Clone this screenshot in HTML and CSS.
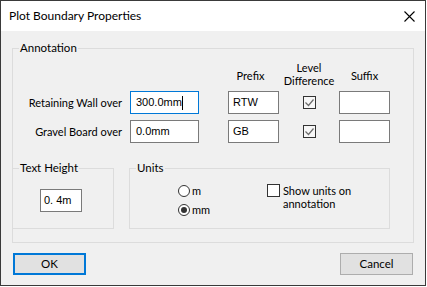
FILE: index.html
```html
<!DOCTYPE html>
<html>
<head>
<meta charset="utf-8">
<link rel="stylesheet" href="styles.css">
</head>
<body>
<div class="window">
  <div class="titlebar">
    <span class="title">Plot Boundary Properties</span>
    <svg class="close" width="11" height="11" viewBox="0 0 11 11"><path d="M0.5 0.5L10.5 10.5M10.5 0.5L0.5 10.5" stroke="#000" stroke-width="1.1" fill="none"/></svg>
  </div>
  <div class="content">
    <fieldset class="group annotation">
      <legend>Annotation</legend>
      <div class="grid">
        <div></div>
        <div></div>
        <div class="hdr hdr-one hdr-prefix">Prefix</div>
        <div class="hdr">Level<br>Difference</div>
        <div class="hdr hdr-one">Suffix</div>

        <div class="lbl">Retaining Wall over</div>
        <div class="cell"><div class="tb focus">300.0mm<span class="caret"></span></div></div>
        <div class="cell"><div class="tb small">RTW</div></div>
        <div class="cell center"><span class="chk"><svg width="11" height="11" viewBox="0 0 11 11"><path d="M1.5 5.5L4.5 8.5L9.5 2.5" stroke="#6b6b6b" stroke-width="1.2" fill="none"/></svg></span></div>
        <div class="cell"><div class="tb small"></div></div>

        <div class="lbl">Gravel Board over</div>
        <div class="cell"><div class="tb">0.0mm</div></div>
        <div class="cell"><div class="tb small">GB</div></div>
        <div class="cell center"><span class="chk"><svg width="11" height="11" viewBox="0 0 11 11"><path d="M1.5 5.5L4.5 8.5L9.5 2.5" stroke="#6b6b6b" stroke-width="1.2" fill="none"/></svg></span></div>
        <div class="cell"><div class="tb small"></div></div>
      </div>
      <div class="subgroups">
        <fieldset class="group textheight">
          <legend>Text Height</legend>
          <div class="tb th">0. 4m</div>
        </fieldset>
        <fieldset class="group units">
          <legend>Units</legend>
          <div class="units-body">
            <div class="radios">
              <div class="radio-row"><span class="radio"></span><span>m</span></div>
              <div class="radio-row"><span class="radio on"></span><span>mm</span></div>
            </div>
            <div class="showunits"><span class="chk2"></span><span class="showtxt">Show units on<br>annotation</span></div>
          </div>
        </fieldset>
      </div>
    </fieldset>
    <div class="buttons">
      <div class="btn ok">OK</div>
      <div class="btn">Cancel</div>
    </div>
  </div>
</div>
</body>
</html>
```
FILE: styles.css
```css
html, body {
  margin: 0;
  padding: 0;
  background: #ffffff;
}
body {
  font-family: Lato, "Noto Sans", sans-serif;
  font-size: 11px;
  color: #000;
}
.window {
  width: 424px;
  height: 284px;
  border: 1px solid #3a3a3a;
  display: flex;
  flex-direction: column;
  background: #f0f0f0;
}
.titlebar {
  height: 30px;
  background: #fff;
  display: flex;
  align-items: center;
  justify-content: space-between;
  padding: 0 10px 0 8px;
  flex: none;
}
.title {
  font-size: 12px;
  margin-top: -1px;
}
.content {
  flex: 1;
  padding: 9px 12px 0 11px;
}
.group {
  border: 1px solid #dcdcdc;
  margin: 0;
  padding: 0;
  min-width: 0;
}
.group legend {
  padding: 0 1px;
  margin-left: 6px;
  line-height: 16px;
  font-size: 11.5px;
}
.annotation {
  width: 402px;
  height: 203px;
  box-sizing: border-box;
}
.grid {
  display: grid;
  grid-template-columns: 117px 98px 51px 60px 51px;
  grid-template-rows: 30px 23px 23px;
  row-gap: 6px;
  margin-top: -1px;
}
.hdr {
  align-self: end;
  text-align: center;
  line-height: 13px;
  margin-bottom: -2px;
}
.hdr-one {
  margin-bottom: 3px;
}
.hdr-prefix {
  padding-right: 6px;
}
.lbl {
  text-align: right;
  padding-right: 8px;
  align-self: center;
  line-height: 16px;
}
.cell {
  display: flex;
  align-items: center;
}
.center {
  justify-content: center;
}
.tb {
  box-sizing: border-box;
  width: 69px;
  height: 23px;
  background: #fff;
  border: 1px solid #7a7a7a;
  font-family: "Liberation Sans", Arial, sans-serif;
  font-size: 11px;
  line-height: 19px;
  padding-left: 5px;
  display: flex;
  align-items: center;
}
.tb.small {
  width: 51px;
  padding-left: 4px;
}
.tb.focus {
  border-color: #0078d7;
}
.caret {
  display: inline-block;
  width: 1px;
  height: 14px;
  background: #000;
}
.chk {
  box-sizing: border-box;
  width: 13px;
  height: 13px;
  border: 1px solid #333;
  background: #f7f7f7;
  display: flex;
  align-items: center;
  justify-content: center;
}
.subgroups {
  display: flex;
  gap: 15px;
  margin-top: 17px;
  margin-left: -1px;
}
.textheight {
  width: 102px;
  height: 69px;
  box-sizing: border-box;
}
.th {
  width: 42px;
  margin: 13px 0 0 27px;
  padding-left: 3px;
}
.units {
  width: 261px;
  height: 69px;
  box-sizing: border-box;
}
.units-body {
  display: flex;
  padding-left: 48px;
  padding-top: 8px;
}
.radios {
  display: flex;
  flex-direction: column;
  gap: 6px;
  width: 89px;
}
.radio-row {
  display: flex;
  align-items: center;
  gap: 2px;
  height: 13px;
}
.radio {
  box-sizing: border-box;
  width: 12px;
  height: 12px;
  border: 1px solid #333;
  border-radius: 50%;
  background: #fff;
  display: flex;
  align-items: center;
  justify-content: center;
}
.radio.on::after {
  content: "";
  width: 6px;
  height: 6px;
  border-radius: 50%;
  background: #333;
}
.showunits {
  display: flex;
  align-items: flex-start;
  gap: 3px;
}
.chk2 {
  box-sizing: border-box;
  width: 13px;
  height: 13px;
  border: 1px solid #333;
  background: #fff;
  flex: none;
}
.showtxt {
  line-height: 13px;
  margin-top: 0px;
}
.buttons {
  display: flex;
  justify-content: space-between;
  margin-top: 10px;
  padding-left: 1px;
}
.btn {
  box-sizing: border-box;
  width: 73px;
  height: 22px;
  background: #e1e1e1;
  border: 1px solid #adadad;
  display: flex;
  align-items: center;
  justify-content: center;
  line-height: 16px;
  font-size: 11.5px;
}
.btn.ok {
  border: 2px solid #0078d7;
}
```
